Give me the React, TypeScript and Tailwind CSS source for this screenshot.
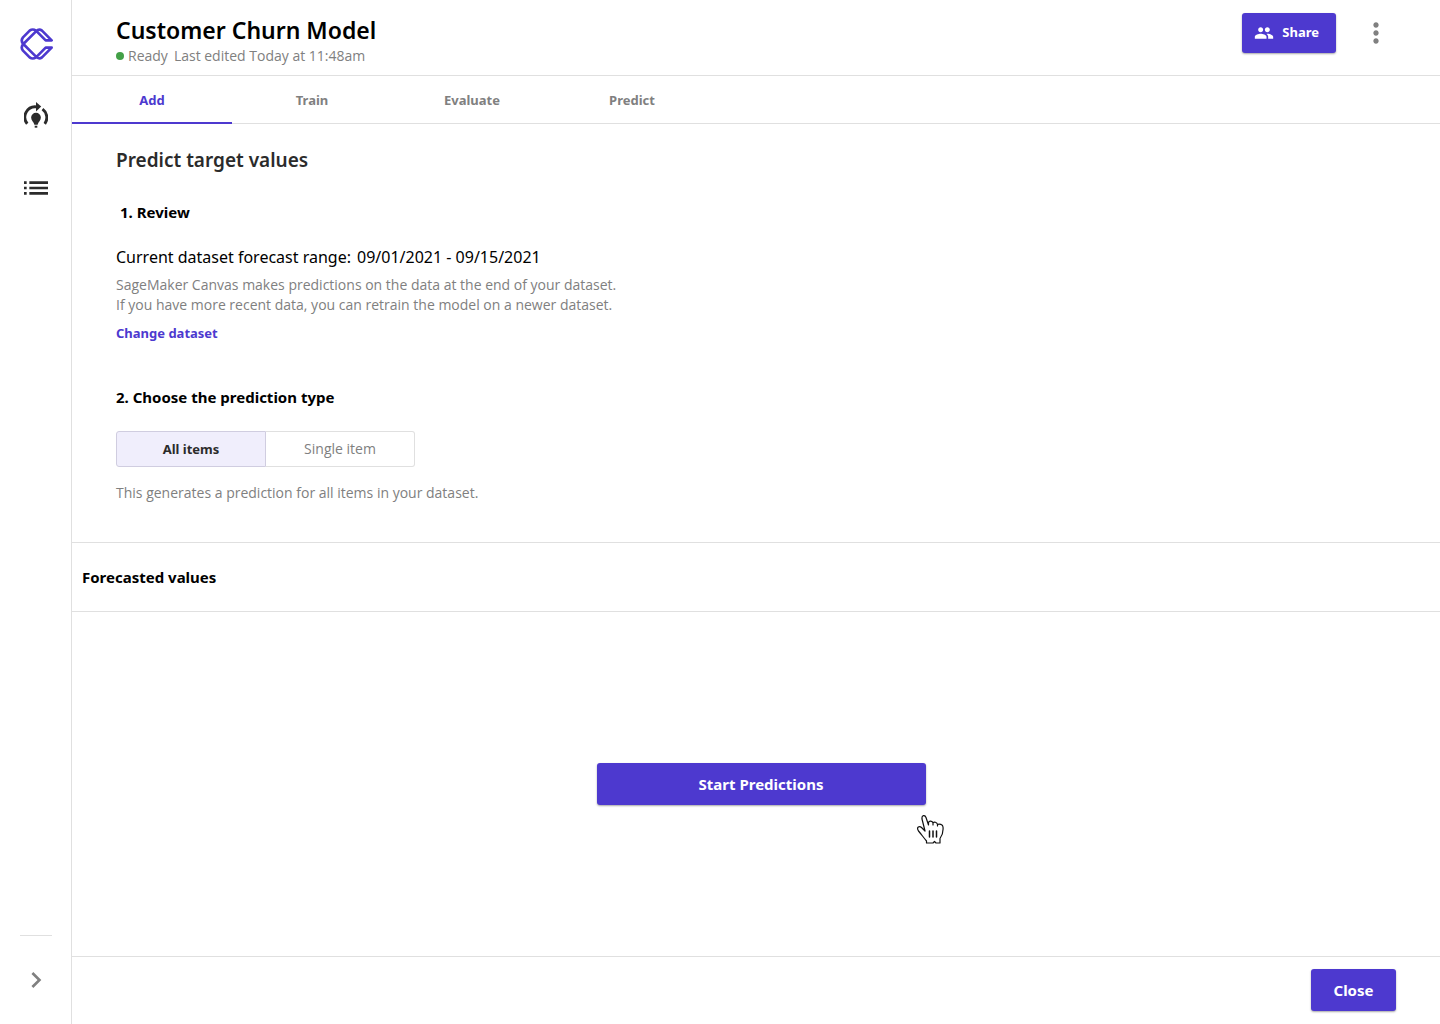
import { MdChevronRight, MdList, MdMoreVert, MdPeople } from "react-icons/md";

function Logo() {
  return (
    <svg width="34" height="32" viewBox="0 0 102 96" fill="none" stroke="#4d39cf" strokeWidth="8" strokeLinejoin="round" aria-hidden="true">
      <path d="M10 48 L48 10 Q57 1 66 8 L95 37 H77 L48 8 Q38 1 29 8 L9 28 Q1 38 10 48 Q1 58 9 68 L29 88 Q38 95 48 88 L77 59 H95 L66 88 Q57 95 48 86 Z" />
    </svg>
  );
}

function ModelsIcon() {
  return (
    <svg width="24" height="26" viewBox="0 0 72 80" fill="currentColor" aria-hidden="true">
      <path d="M9 67 A32 32 0 0 1 38 15" fill="none" stroke="currentColor" strokeWidth="9" />
      <path d="M36 0 L52 14 L36 29 Z" />
      <path d="M56 22 A32 32 0 0 1 63 67" fill="none" stroke="currentColor" strokeWidth="9" />
      <path d="M36 33 A15 15 0 0 1 51 48 C51 57 43 62 41 70 H31 C29 62 21 57 21 48 A15 15 0 0 1 36 33 Z" />
      <path d="M32 73 H40 V79 H32 Z" />
    </svg>
  );
}

function HandCursor() {
  return (
    <svg width="28" height="32" viewBox="0 0 28 32" fill="#fff" stroke="#111" strokeWidth="1.2" strokeLinejoin="round" strokeLinecap="round" aria-hidden="true">
      <path d="M9 17 L6 5 C5.500 1 9 0.500 10 3.500 L12.500 11 V8.500 C13 6.500 16.500 6.500 17 9 V11 V9 C18 7.500 21 8 21.500 10.500 V12 V10.500 C23 9.500 27 10.500 27 13 C27.500 18 26.500 21 24 24.500 V29 H20 L18.500 27.500 L17 29 H10.500 V27 C8 24 5 20 2.500 17 C0 13 3.500 11.500 5.500 13.500 L9 17 Z" />
      <path d="M13.500 17 V23 M17 17 V23 M20.500 17 V23" strokeWidth="1.5" />
    </svg>
  );
}

const tabs = ["Add", "Train", "Evaluate", "Predict"];
const heading = "font-['Noto_Sans',sans-serif] text-[15px] leading-6 font-bold";
const smallBold = "font-['Noto_Sans',sans-serif] text-[13px] font-bold";
const primary =
  "flex items-center justify-center rounded-[3px] bg-[#4d39cf] font-['Noto_Sans',sans-serif] font-bold text-white shadow-[0_1px_2px_rgba(0,0,0,0.35)]";

export default function App() {
  return (
    <div className="flex min-h-screen bg-white font-['Open_Sans','Noto_Sans',sans-serif] text-black">
      <aside className="flex w-18 shrink-0 flex-col items-center border-r border-[#e0e0e0]">
        <a href="#home" aria-label="Canvas home" className="mt-7 pl-0.5">
          <Logo />
        </a>
        <nav aria-label="Main" className="mt-[42px] flex flex-col items-center gap-11 text-[#2b2b2b]">
          <a href="#models" aria-label="Models">
            <ModelsIcon />
          </a>
          <a href="#datasets" aria-label="Datasets">
            <MdList size={32} />
          </a>
        </nav>
        <div className="mt-auto flex w-full flex-col items-center gap-7 pb-7">
          <hr className="w-8 border-[#e0e0e0]" />
          <button type="button" aria-label="Expand menu" className="text-[#808080]">
            <MdChevronRight size={32} />
          </button>
        </div>
      </aside>

      <main className="flex min-w-0 flex-1 flex-col">
        <header className="flex h-19 items-start justify-between border-b border-[#e0e0e0] pr-12 pl-11">
          <div className="pt-3.5">
            <h1 className="font-['Noto_Sans',sans-serif] text-[23px] leading-8 font-semibold">Customer Churn Model</h1>
            <p className="flex items-center text-sm leading-5 text-[#808080]">
              <span className="mr-1 size-2 rounded-full bg-[#43a047]" />
              <span className="mr-1.5">Ready</span>
              <span>Last edited Today at 11:48am</span>
            </p>
          </div>
          <div className="flex items-center gap-6 pt-[13px]">
            <button type="button" className={`${primary} h-10 gap-2 pr-[17px] pl-3 text-[13px]`}>
              <MdPeople size={20} />
              Share
            </button>
            <button type="button" aria-label="More options" className="text-[#808080]">
              <MdMoreVert size={32} />
            </button>
          </div>
        </header>

        <nav aria-label="Model steps" className="flex h-12 border-b border-[#e0e0e0]">
          {tabs.map((tab, i) => (
            <button
              key={tab}
              type="button"
              aria-current={i === 0 ? "step" : undefined}
              className={
                i === 0
                  ? `${smallBold} -mb-px w-40 border-b-2 border-[#4d39cf] pt-[3px] text-[#4d39cf]`
                  : `${smallBold} w-40 pt-0.5 text-[#808080]`
              }
            >
              {tab}
            </button>
          ))}
        </nav>

        <section className="border-b border-[#e0e0e0] px-11 pt-5 pb-[39px]">
          <h2 className="font-['Noto_Sans',sans-serif] text-[19px] leading-8 font-semibold text-[#2b2b2b]">
            Predict target values
          </h2>
          <h3 className={`${heading} mt-6 pl-1`}>1. Review</h3>
          <p className="mt-[21px] font-['Noto_Sans',sans-serif] text-base leading-6">
            <span className="mr-1.5">Current dataset forecast range:</span>
            <span>09/01/2021 - 09/15/2021</span>
          </p>
          <p className="mt-1.5 text-sm leading-5 text-[#808080]">
            SageMaker Canvas makes predictions on the data at the end of your dataset.
            <br />
            If you have more recent data, you can retrain the model on a newer dataset.
          </p>
          <a href="#change-dataset" className={`${smallBold} mt-2 inline-block leading-5 text-[#4d39cf]`}>
            Change dataset
          </a>
          <h3 className={`${heading} mt-[41px]`}>2. Choose the prediction type</h3>
          <div role="group" aria-label="Prediction type" className="mt-[22px] flex text-sm">
            <button
              type="button"
              aria-pressed="true"
              className={`${smallBold} h-9 w-[150px] rounded-l-[3px] border border-[#d0cde0] bg-[#f0eefc] text-[#2b2b2b]`}
            >
              All items
            </button>
            <button
              type="button"
              aria-pressed="false"
              className="h-9 w-[149px] rounded-r-[3px] border border-l-0 border-[#e0e0e0] text-[#808080]"
            >
              Single item
            </button>
          </div>
          <p className="mt-4 text-sm leading-5 text-[#808080]">
            This generates a prediction for all items in your dataset.
          </p>
        </section>

        <h3 className={`${heading} border-b border-[#e0e0e0] px-2.5 py-[22px]`}>Forecasted values</h3>

        <section className="flex flex-1 items-center justify-center pl-2.5">
          <div className="relative">
            <button type="button" className={`${primary} h-[42px] w-[329px] text-[15px]`}>
              Start Predictions
            </button>
            <div className="pointer-events-none absolute -right-[18px] -bottom-[41px]">
              <HandCursor />
            </div>
          </div>
        </section>

        <footer className="flex justify-end border-t border-[#e0e0e0] px-11 pt-3 pb-[13px]">
          <button type="button" className={`${primary} h-[42px] w-[85px] text-[15px]`}>
            Close
          </button>
        </footer>
      </main>
    </div>
  );
}
